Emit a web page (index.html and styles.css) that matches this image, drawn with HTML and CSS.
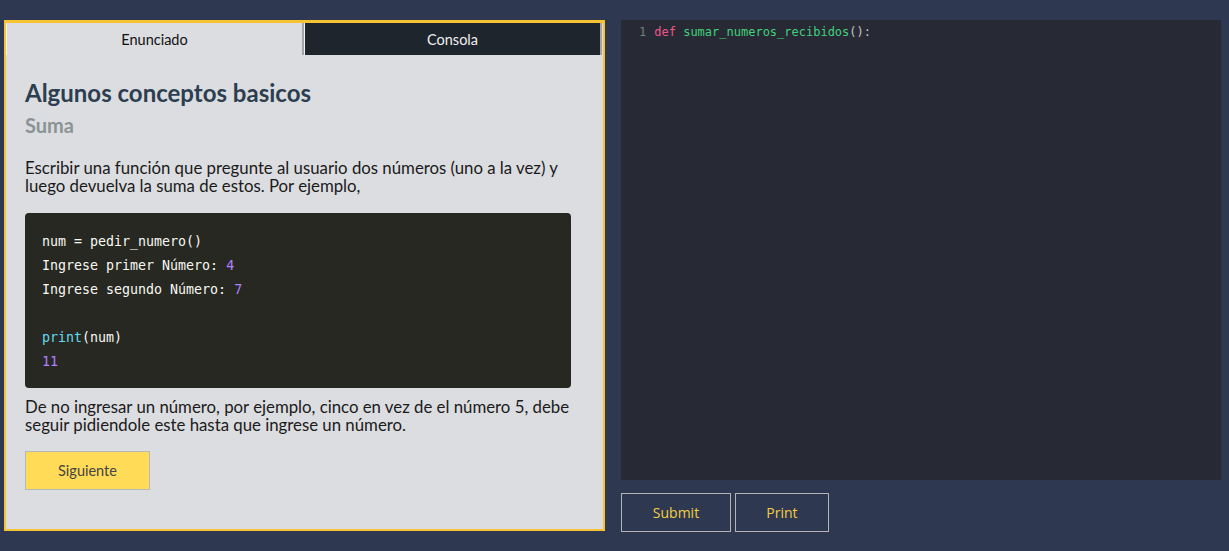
FILE: index.html
```html
<!DOCTYPE html>
<html lang="es">
<head>
<meta charset="utf-8">
<title>Suma</title>
<link rel="stylesheet" href="styles.css">
</head>
<body>
<div class="layout">
  <section class="panel">
    <div class="tabs">
      <button class="tab tab-active">Enunciado</button>
      <button class="tab tab-dark">Consola</button>
    </div>
    <div class="content">
      <h1 class="title">Algunos conceptos basicos</h1>
      <h2 class="subtitle">Suma</h2>
      <p class="text">Escribir una función que pregunte al usuario dos números (uno a la vez) y luego devuelva la suma de estos. Por ejemplo,</p>
      <pre class="code"><code>num = pedir_numero()
Ingrese primer Número: <span class="num">4</span>
Ingrese segundo Número: <span class="num">7</span>

<span class="fn">print</span>(num)
<span class="num">11</span></code></pre>
      <p class="text">De no ingresar un número, por ejemplo, cinco en vez de el número 5, debe seguir pidiendole este hasta que ingrese un número.</p>
      <button class="next">Siguiente</button>
    </div>
  </section>
  <section class="side">
    <div class="editor">
      <div class="line"><span class="ln">1</span><span class="kw">def</span> <span class="def">sumar_numeros_recibidos</span><span class="punc">():</span></div>
    </div>
    <div class="actions">
      <button class="action action-submit">Submit</button>
      <button class="action action-print">Print</button>
    </div>
  </section>
</div>
</body>
</html>
```
FILE: styles.css
```css
html, body {
  margin: 0;
  padding: 0;
  background: #2e3850;
}
body {
  font-family: "Lato", "Open Sans", sans-serif;
}
.layout {
  display: grid;
  grid-template-columns: 601px 600px;
  column-gap: 16px;
  padding: 20px 8px 0 4px;
  align-items: start;
}
.panel {
  background: #dcdde0;
  border: 2px solid #f7c333;
  border-top-width: 3px;
  box-sizing: border-box;
  height: 511px;
}
.tabs {
  display: flex;
  height: 32px;
  padding-right: 1px;
}
.tab {
  flex: 1;
  margin: 0;
  font-family: "Lato", "Open Sans", sans-serif;
  font-size: 14.5px;
  border: none;
  border-left: 1px solid #f4f4f4;
  border-right: 2px solid #a4a4a4;
  padding: 0;
  cursor: pointer;
}
.tab-active {
  background: #dcdde0;
  color: #111;
}
.tab-dark {
  background: #1f252d;
  color: #f0f0f0;
}
.content {
  padding: 22px 21px 0 19px;
}
.title {
  margin: 0;
  font-size: 24px;
  font-weight: 700;
  color: #2c3e50;
  line-height: 32px;
}
.subtitle {
  margin: 3px 0 0;
  font-size: 20px;
  font-weight: 700;
  color: #8a9494;
  line-height: 26px;
}
.text {
  margin: 21px 0 0;
  font-size: 16.8px;
  line-height: 18px;
  color: #1a1a1a;
}
.code {
  margin: 18px 11px 0 0;
  background: #272822;
  border-radius: 4px;
  padding: 17px 17px 14px;
  color: #f8f8f2;
  font-family: "DejaVu Sans Mono", "Liberation Mono", monospace;
  font-size: 13.3px;
  line-height: 24px;
}
.code + .text {
  margin-top: 10px;
}
.num { color: #ae81ff; }
.fn { color: #66d9ef; }
.next {
  margin-top: 17px;
  width: 125px;
  height: 39px;
  background: #ffdb58;
  border: 1px solid #b8b8b8;
  color: #444;
  font-family: "Lato", "Open Sans", sans-serif;
  font-size: 14.5px;
  cursor: pointer;
}
.side {
  display: flex;
  flex-direction: column;
}
.editor {
  background: #272935;
  height: 460px;
  padding: 4px 0 0 18px;
  box-sizing: border-box;
  font-family: "DejaVu Sans Mono", "Liberation Mono", monospace;
  font-size: 12px;
  line-height: 16px;
  color: #cfcfcf;
}
.ln {
  color: #6f7f74;
  margin-right: 8px;
}
.kw { color: #f0568a; }
.def { color: #43d17a; }
.punc { color: #c8c8c8; }
.actions {
  display: flex;
  gap: 4px;
  margin-top: 13px;
}
.action {
  height: 39px;
  background: transparent;
  border: 1px solid #b4b4b8;
  color: #f2cf43;
  font-family: "Open Sans", "Noto Sans", sans-serif;
  font-size: 14px;
  cursor: pointer;
}
.action-submit { width: 110px; }
.action-print { width: 94px; }
```
